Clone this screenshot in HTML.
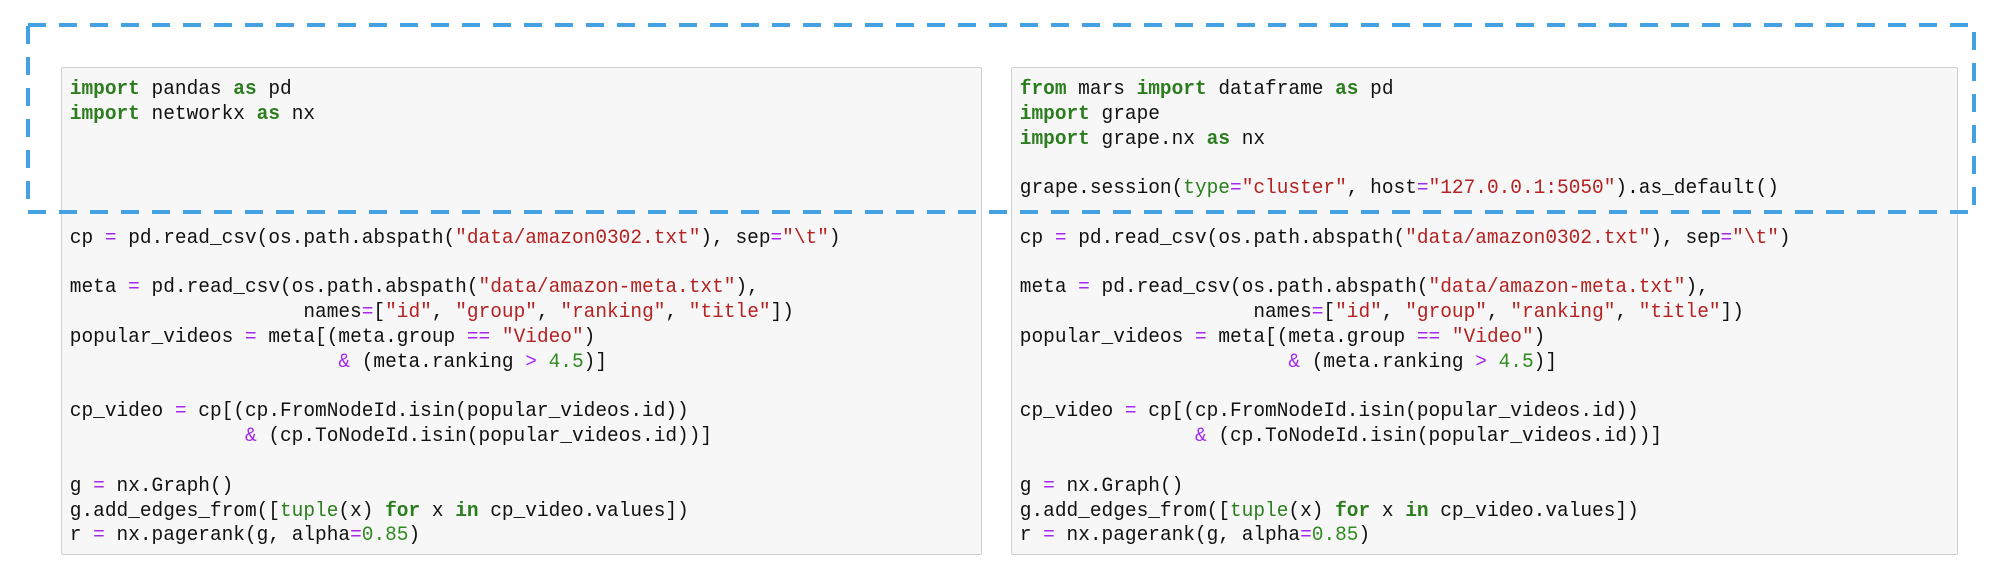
<!DOCTYPE html>
<html><head><meta charset="utf-8"><style>
html,body{margin:0;padding:0;background:#fff;width:2000px;height:587px;overflow:hidden;position:relative}
.cell{position:absolute;top:67px;height:486px;background:#f7f7f7;border:1px solid #cfcfcf;border-radius:2px;box-sizing:content-box}
pre{margin:0;padding:10px 0 0 8px;font-family:"Liberation Mono",monospace;font-size:20px;line-height:24.8px;color:#111;transform:scaleX(0.973);transform-origin:0 0}
.k{color:#2b7d1e;font-weight:bold}
.b{color:#2b7d1e}
.s{color:#b42222}
.o{color:#a626f2}
.n{color:#2f8a1f}
svg{position:absolute;left:0;top:0}
</style></head><body>
<div class="cell" style="left:61px;width:919px">
<pre><span class="k">import</span> pandas <span class="k">as</span> pd
<span class="k">import</span> networkx <span class="k">as</span> nx




cp <span class="o">=</span> pd.read_csv(os.path.abspath(<span class="s">"data/amazon0302.txt"</span>), sep<span class="o">=</span><span class="s">"\t"</span>)

meta <span class="o">=</span> pd.read_csv(os.path.abspath(<span class="s">"data/amazon-meta.txt"</span>),
                    names<span class="o">=</span>[<span class="s">"id"</span>, <span class="s">"group"</span>, <span class="s">"ranking"</span>, <span class="s">"title"</span>])
popular_videos <span class="o">=</span> meta[(meta.group <span class="o">==</span> <span class="s">"Video"</span>)
                       <span class="o">&amp;</span> (meta.ranking <span class="o">&gt;</span> <span class="n">4.5</span>)]

cp_video <span class="o">=</span> cp[(cp.FromNodeId.isin(popular_videos.id))
               <span class="o">&amp;</span> (cp.ToNodeId.isin(popular_videos.id))]

g <span class="o">=</span> nx.Graph()
g.add_edges_from([<span class="b">tuple</span>(x) <span class="k">for</span> x <span class="k">in</span> cp_video.values])
r <span class="o">=</span> nx.pagerank(g, alpha<span class="o">=</span><span class="n">0.85</span>)</pre>
</div>
<div class="cell" style="left:1011px;width:945px">
<pre><span class="k">from</span> mars <span class="k">import</span> dataframe <span class="k">as</span> pd
<span class="k">import</span> grape
<span class="k">import</span> grape.nx <span class="k">as</span> nx

grape.session(<span class="b">type</span><span class="o">=</span><span class="s">"cluster"</span>, host<span class="o">=</span><span class="s">"127.0.0.1:5050"</span>).as_default()

cp <span class="o">=</span> pd.read_csv(os.path.abspath(<span class="s">"data/amazon0302.txt"</span>), sep<span class="o">=</span><span class="s">"\t"</span>)

meta <span class="o">=</span> pd.read_csv(os.path.abspath(<span class="s">"data/amazon-meta.txt"</span>),
                    names<span class="o">=</span>[<span class="s">"id"</span>, <span class="s">"group"</span>, <span class="s">"ranking"</span>, <span class="s">"title"</span>])
popular_videos <span class="o">=</span> meta[(meta.group <span class="o">==</span> <span class="s">"Video"</span>)
                       <span class="o">&amp;</span> (meta.ranking <span class="o">&gt;</span> <span class="n">4.5</span>)]

cp_video <span class="o">=</span> cp[(cp.FromNodeId.isin(popular_videos.id))
               <span class="o">&amp;</span> (cp.ToNodeId.isin(popular_videos.id))]

g <span class="o">=</span> nx.Graph()
g.add_edges_from([<span class="b">tuple</span>(x) <span class="k">for</span> x <span class="k">in</span> cp_video.values])
r <span class="o">=</span> nx.pagerank(g, alpha<span class="o">=</span><span class="n">0.85</span>)</pre>
</div>
<svg width="2000" height="587" viewBox="0 0 2000 587">
<rect x="28" y="25" width="1946" height="187" fill="none" stroke="#44a2e3" stroke-width="4" stroke-dasharray="18 13"/>
</svg>
</body></html>
